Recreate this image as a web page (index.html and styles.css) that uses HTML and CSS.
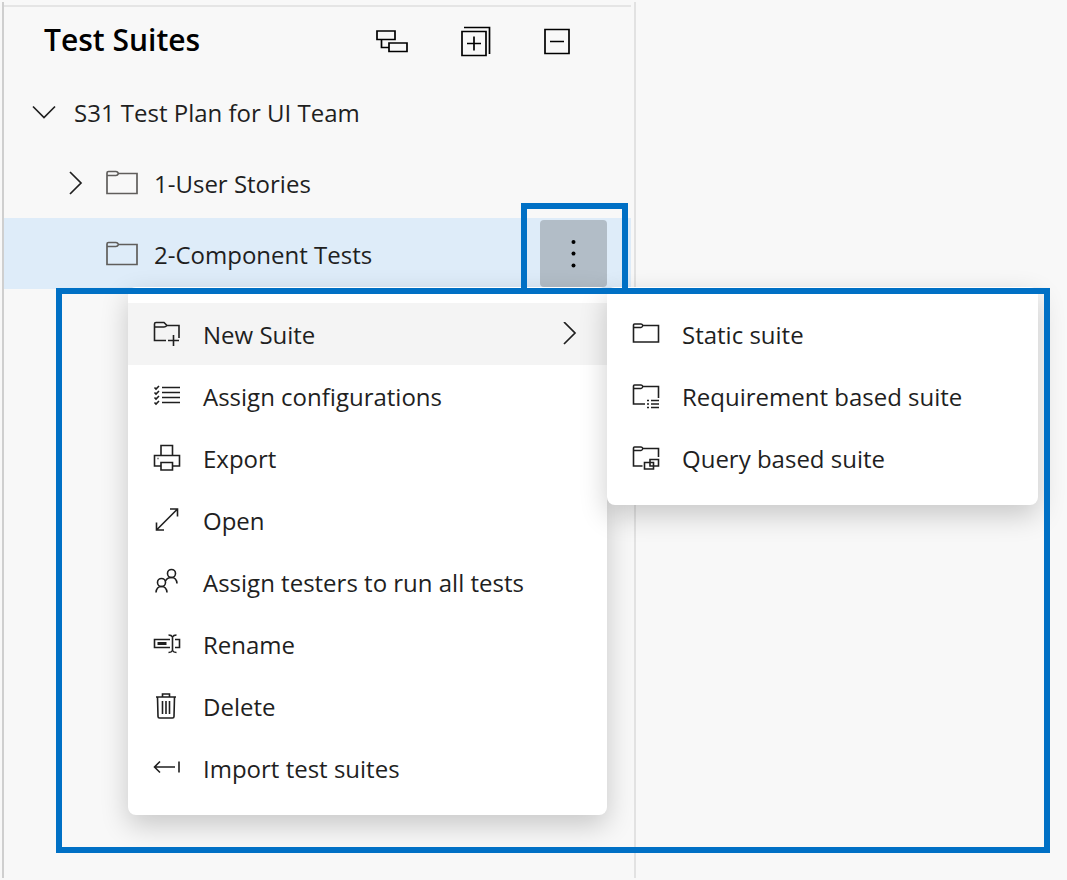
FILE: index.html
```html
<!DOCTYPE html>
<html lang="en">
<head>
<meta charset="utf-8">
<meta name="viewport" content="width=device-width, initial-scale=1">
<title>Test Suites</title>
<link rel="stylesheet" href="styles.css">
</head>
<body>
<div class="page">
  <section class="panel" aria-labelledby="panel-title">
    <div class="panel-body">
      <header class="panel-header">
        <h1 class="panel-title" id="panel-title">Test Suites</h1>
        <div class="toolbar">
          <button class="tool" type="button" aria-label="Show hierarchy">
            <svg class="tool-icon" viewBox="0 0 34 34"><path d="M2 7h18v8.500H2zM14 19h18v8.500H14zM6.500 15.500v8H14"/></svg>
          </button>
          <button class="tool" type="button" aria-label="Expand all">
            <svg class="tool-icon" viewBox="0 0 34 34"><path d="M4 7.500h24v24H4zM6 3.500h25.500V30M16 12.500v14M9 19.500h14"/></svg>
          </button>
          <button class="tool" type="button" aria-label="Collapse all">
            <svg class="tool-icon" viewBox="0 0 34 34"><path d="M4 5.500h24v24H4zM9 17.500h14"/></svg>
          </button>
        </div>
      </header>

      <ul class="tree">
        <li class="row row-root">
          <button class="twisty" type="button" aria-label="Collapse S31 Test Plan for UI Team">
            <svg class="chevron-down" viewBox="0 0 24 24"><path d="M1 6.500l11 11 11-11"/></svg>
          </button>
          <span class="row-label">S31 Test Plan for UI Team</span>
        </li>
        <li class="row row-child">
          <button class="twisty" type="button" aria-label="Expand 1-User Stories">
            <svg class="chevron-right" viewBox="0 0 24 24"><path d="M6 1l11 11L6 23"/></svg>
          </button>
          <svg class="folder" viewBox="0 0 32 26"><path d="M1 23.500V3q0-1.500 1.500-1.500H10q1.500 0 2.500 2h18.500v20zM1 5.500h9q1.500 0 2.500-2"/></svg>
          <span class="row-label">1-User Stories</span>
        </li>
        <li class="row row-child row-selected">
          <span class="twisty"></span>
          <svg class="folder" viewBox="0 0 32 26"><path d="M1 23.500V3q0-1.500 1.500-1.500H10q1.500 0 2.500 2h18.500v20zM1 5.500h9q1.500 0 2.500-2"/></svg>
          <span class="row-label">2-Component Tests</span>
          <div class="more-wrap">
            <button class="more" type="button" aria-label="More options" aria-haspopup="menu" aria-expanded="true">
              <svg class="more-icon" viewBox="0 0 34 34"><circle cx="16.500" cy="5" r="2"/><circle cx="16.500" cy="16.500" r="2"/><circle cx="16.500" cy="28.500" r="2"/></svg>
            </button>
          </div>

          <div class="popover">
            <div class="menu" role="menu">
              <button class="item item-active" type="button" role="menuitem">
                <svg class="icon" viewBox="0 0 28 28"><path d="M13 20.500H1.500V4q0-1.500 1.500-1.500h8l3 3h12V18M1.500 7H11q1.500 0 3-1.500M20.500 15v11M15 20.500h11"/></svg>
                <span class="item-label">New Suite</span>
                <svg class="chevron-right" viewBox="0 0 24 24"><path d="M6 0l11 11L6 22"/></svg>
              </button>
              <button class="item" type="button" role="menuitem">
                <svg class="icon" viewBox="0 0 28 28"><path d="M9 5.500h18M9 10.500h18M9 15.500h18M9 20.500h18M1.500 5.500L3 7l3-3M1.500 10.500L3 12l3-3M1.500 15.500L3 17l3-3M1.500 20.500L3 22l3-3"/></svg>
                <span class="item-label">Assign configurations</span>
              </button>
              <button class="item" type="button" role="menuitem">
                <svg class="icon" viewBox="0 0 28 28"><path d="M8 11.500V1.500h11.500v10M8 22H1.500V11.500h25V22h-7M8 18.500h11.500v7.500H8zM4.500 14.500h1"/></svg>
                <span class="item-label">Export</span>
              </button>
              <button class="item" type="button" role="menuitem">
                <svg class="icon" viewBox="0 0 28 28"><path d="M3.500 24l21-21M17 3h7.500v7.500M3.500 16.500V24H11"/></svg>
                <span class="item-label">Open</span>
              </button>
              <button class="item" type="button" role="menuitem">
                <svg class="icon" viewBox="0 0 28 28"><circle cx="8.500" cy="14.500" r="4"/><circle cx="18.500" cy="5.500" r="4"/><path d="M3 24.500q.5-6 5.500-6t5.500 6M12.500 13q1.500-3.500 6-3.500 5 0 5.500 6"/></svg>
                <span class="item-label">Assign testers to run all tests</span>
              </button>
              <button class="item" type="button" role="menuitem">
                <svg class="icon" viewBox="0 0 28 28"><path d="M17 9.500H1.500v8H17M22 9.500h4.500v8H22M19.500 6v15M15.500 5q3 0 4 2 1-2 4-2M15.500 22.500q3 0 4-2 1 2 4 2"/><path class="heavy" d="M4.500 13.500h9"/></svg>
                <span class="item-label">Rename</span>
              </button>
              <button class="item" type="button" role="menuitem">
                <svg class="icon" viewBox="0 0 28 28"><path d="M3 5h20M9.500 5V2h7v3M4.500 5l.5 19.500q0 1.500 1.500 1.500h13q1.500 0 1.500-1.500L21.500 5M9.500 9v13M13 9v13M16.500 9v13"/></svg>
                <span class="item-label">Delete</span>
              </button>
              <button class="item" type="button" role="menuitem">
                <svg class="icon" viewBox="0 0 28 28"><path d="M1.500 13H22M7 7.500L1.500 13 7 18.500M26 7.500v11"/></svg>
                <span class="item-label">Import test suites</span>
              </button>
            </div>
            <div class="menu submenu" role="menu" aria-label="New Suite">
              <button class="item" type="button" role="menuitem">
                <svg class="icon" viewBox="0 0 28 28"><path d="M1.500 22V5q0-1 1-1H9q1 0 2 1.500h15.500V22zM1.500 7.500H9q1 0 2-2"/></svg>
                <span class="item-label">Static suite</span>
              </button>
              <button class="item" type="button" role="menuitem">
                <svg class="icon" viewBox="0 0 28 28"><path d="M13 22H1.500V4q0-1 1-1H9q1 0 2 1.500h15.500V16M1.500 6.500H9q1 0 2-2M19 18.500h8M19 22h8M19 25.500h8M15 18.500h2M15 22h2M15 25.500h2"/></svg>
                <span class="item-label">Requirement based suite</span>
              </button>
              <button class="item" type="button" role="menuitem">
                <svg class="icon" viewBox="0 0 28 28"><path d="M10.500 22h-9V4q0-1 1-1H9q1 0 2 1.500h15.500V13M1.500 6.500H9q1 0 2-2M12.500 18.500h9V25h-9zM18 15.500h8.500V22H18z"/></svg>
                <span class="item-label">Query based suite</span>
              </button>
            </div>
          </div>
        </li>
      </ul>
    </div>
  </section>
  <main class="content"></main>
</div>
</body>
</html>
```
FILE: styles.css
```css
* {
  box-sizing: border-box;
}

body {
  margin: 0;
  background: #f8f8f8;
  color: #1f1f1f;
  font-family: "Open Sans", "Noto Sans", sans-serif;
  font-size: 24px;
  line-height: 32px;
}

button {
  margin: 0;
  padding: 0;
  border: 0;
  background: none;
  color: inherit;
  font: inherit;
  text-align: left;
}

svg {
  display: block;
  flex: none;
  fill: none;
  stroke: currentColor;
}

.page {
  display: grid;
  grid-template-columns: 634fr 431fr;
  min-height: 100vh;
  padding: 2px 0 2px 2px;
  overflow: hidden;
}

.panel {
  border-left: 2px solid #cfcfcf;
  border-right: 2px solid #e2e2e2;
  padding: 3px 3px 0 0;
}

.panel-body {
  border-top: 2px solid #e5e5e5;
}

.panel-header {
  display: flex;
  align-items: center;
  justify-content: space-between;
  height: 69px;
  padding: 0 56px 2px 40px;
}

.panel-title {
  margin: 0;
  padding-bottom: 2px;
  color: #000;
  font-size: 30px;
  font-weight: 600;
}

.toolbar {
  display: flex;
  gap: 49px;
  color: #000;
}

.tool-icon {
  width: 34px;
  height: 34px;
  stroke-width: 1.7;
}

.tree {
  margin: 0;
  padding: 0;
  list-style: none;
}

.row {
  position: relative;
  display: flex;
  align-items: center;
  height: 71px;
  padding-right: 24px;
}

.row-root {
  padding-left: 28px;
}

.row-child {
  padding-left: 60px;
}

.row-selected {
  background: #deecf9;
}

.row-label {
  flex: 1;
  padding-top: 3px;
}

.twisty {
  display: flex;
  flex: none;
  width: 42px;
}

.chevron-down,
.chevron-right {
  width: 24px;
  height: 24px;
  stroke-width: 1.7;
}

.folder {
  width: 32px;
  height: 26px;
  margin-right: 16px;
  color: #605e5c;
  stroke-width: 1.7;
}

.more-wrap {
  position: relative;
}

.more-wrap::after {
  content: "";
  position: absolute;
  inset: -17px -21px -7px -19px;
  z-index: 3;
  border: 6px solid #0070c5;
  pointer-events: none;
}

.more {
  display: grid;
  place-items: center;
  width: 67px;
  height: 67px;
  border-radius: 4px;
  background: #b2bdc7;
  color: #000;
}

.more-icon {
  width: 34px;
  height: 34px;
  fill: currentColor;
  stroke: none;
}

.popover {
  position: absolute;
  top: 69px;
  left: 52px;
  z-index: 2;
  display: flex;
  align-items: flex-start;
  padding: 0 12px 38px 72px;
}

.popover::after {
  content: "";
  position: absolute;
  inset: 1px 0 0;
  border: 6px solid #0070c5;
  pointer-events: none;
}

.menu {
  display: flex;
  flex-direction: column;
  width: 479px;
  padding: 16px 0;
  border-radius: 8px;
  background: #fff;
  box-shadow: 0 10px 28px rgba(0, 0, 0, 0.2);
}

.submenu {
  width: 431px;
}

.item {
  display: flex;
  align-items: center;
  gap: 22px;
  height: 62px;
  padding: 0 25px;
  white-space: nowrap;
}

.item-active {
  background: #f4f4f4;
}

.item-label {
  flex: 1;
  padding-top: 1px;
}

.icon {
  width: 28px;
  height: 28px;
  stroke-width: 1.6;
}

.icon .heavy {
  stroke-width: 3;
}
```
